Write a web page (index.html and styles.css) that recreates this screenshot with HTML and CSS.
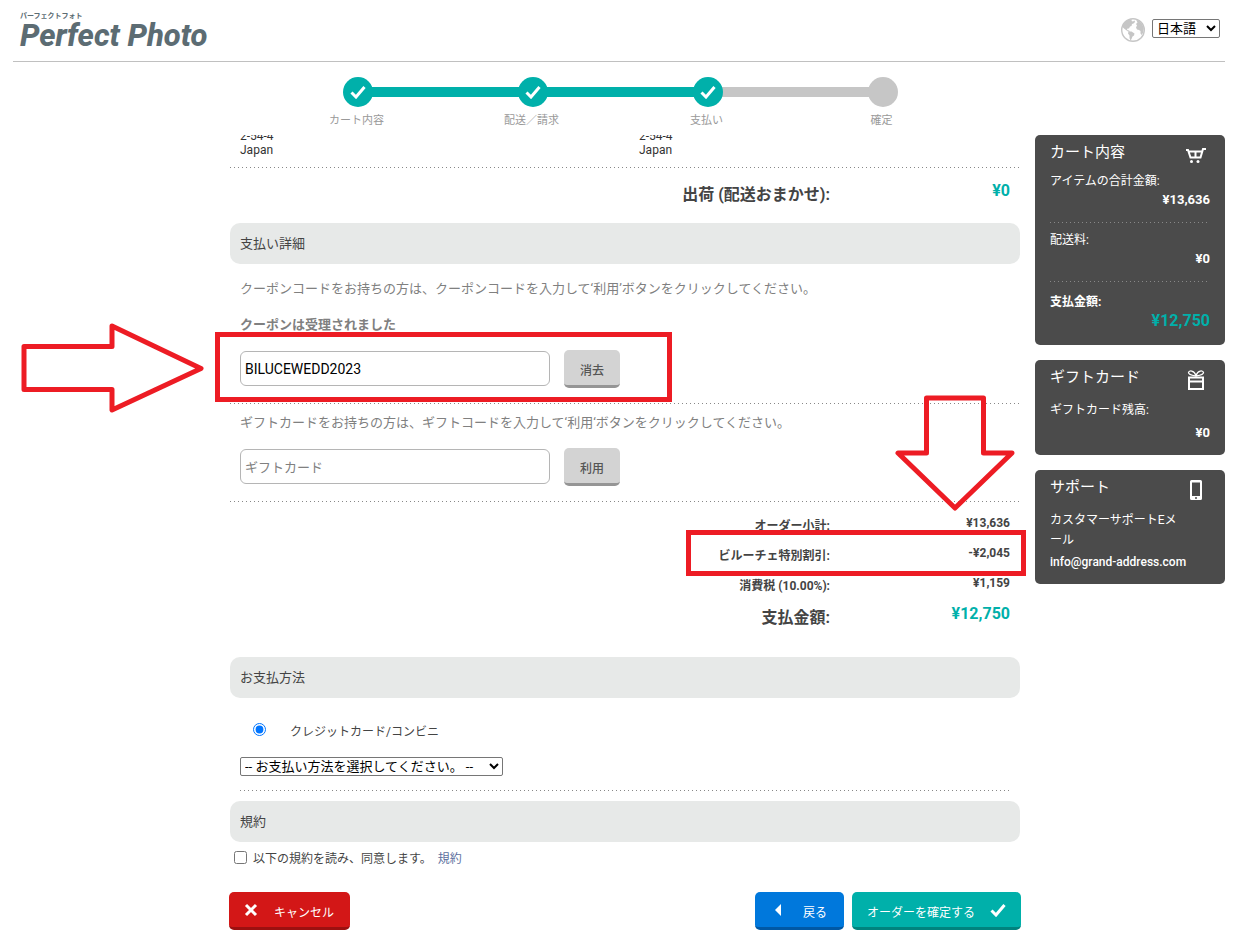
FILE: index.html
```html
<!DOCTYPE html>
<html lang="ja">
<head>
<meta charset="utf-8">
<meta name="viewport" content="width=device-width, initial-scale=1">
<title>Perfect Photo</title>
<link rel="stylesheet" href="styles.css">
</head>
<body>
<header class="header">
  <a class="logo" href="#"><span class="logo-kana">パーフェクトフォト</span><span class="logo-name">Perfect Photo</span></a>
  <div class="language">
    <svg class="globe" viewBox="0 0 24 24" aria-hidden="true">
      <circle cx="12" cy="12" r="11.3" fill="#fff" stroke="#c6c6c6" stroke-width="1.4"/>
      <path fill="#c6c6c6" d="M2 6.500 5 3 8 1.500 11 1.200 10.500 3 12 3.500 13.500 2.500 14 4 12.500 5.500 11 6 10.500 8 9 8.500 8 10.500 6.500 10.500 6 12 8 12.500 9 13.300 7 13.500 5 12 3 10.500 1.500 9ZM7.500 13.500 10.500 13.500 13.500 15.500 13 17.500 11.500 18.500 10.500 21 9.500 22.500 8.500 20 8.500 17.500 7 15.500ZM15 1.500 18.500 3 21.500 6.500 22.800 11 22 15 20.500 17 19.500 15.500 19.500 13 18 12 16 11.500 15 9.500 16 7.500 15 6 16.500 4.500Z"/>
    </svg>
    <select class="select" aria-label="言語"><option>日本語</option></select>
  </div>
</header>

<ol class="steps">
  <li class="step done"><span class="dot"><svg viewBox="0 0 16 14"><path d="M1.500 7.500 6 12 14.500 2"/></svg></span><span>カート内容</span></li>
  <li class="step done"><span class="dot"><svg viewBox="0 0 16 14"><path d="M1.500 7.500 6 12 14.500 2"/></svg></span><span>配送／請求</span></li>
  <li class="step done"><span class="dot"><svg viewBox="0 0 16 14"><path d="M1.500 7.500 6 12 14.500 2"/></svg></span><span>支払い</span></li>
  <li class="step"><span class="dot"></span><span>確定</span></li>
</ol>

<div class="layout">
  <main class="main">
    <div class="addresses">
      <address>2-54-4<br>Japan</address>
      <address>2-54-4<br>Japan</address>
    </div>
    <hr class="rule">
    <dl class="totals shipping">
      <div class="total-row grand"><dt>出荷 (配送おまかせ):</dt><dd>¥0</dd></div>
    </dl>

    <h2 class="bar">支払い詳細</h2>
    <section class="code coupon">
      <p>クーポンコードをお持ちの方は、クーポンコードを入力して‘利用’ボタンをクリックしてください。</p>
      <p class="accepted">クーポンは受理されました</p>
      <div class="code-row">
        <input class="field" type="text" value="BILUCEWEDD2023" aria-label="クーポンコード">
        <button class="btn grey" type="button">消去</button>
      </div>
      <span class="mark-box" aria-hidden="true"></span>
      <svg class="mark-arrow-right" viewBox="0 0 184 90" aria-hidden="true"><path d="M3 23.500H91V3L180 45.500 91 87V66.500H3Z"/></svg>
    </section>
    <hr class="rule">
    <section class="code gift">
      <p>ギフトカードをお持ちの方は、ギフトコードを入力して‘利用‘ボタンをクリックしてください。</p>
      <div class="code-row">
        <input class="field" type="text" placeholder="ギフトカード" aria-label="ギフトカード">
        <button class="btn grey" type="button">利用</button>
      </div>
    </section>
    <hr class="rule">
    <dl class="totals order">
      <div class="total-row"><dt>オーダー小計:</dt><dd>¥13,636</dd></div>
      <div class="total-row marked"><dt>ビルーチェ特別割引:</dt><dd>-¥2,045</dd></div>
      <div class="total-row"><dt>消費税 (10.00%):</dt><dd>¥1,159</dd></div>
      <div class="total-row grand"><dt>支払金額:</dt><dd>¥12,750</dd></div>
    </dl>
    <svg class="mark-arrow-down" viewBox="0 0 120 116" aria-hidden="true"><path d="M31.500 3H88.500V58H117L60 113 3 58H31.500Z"/></svg>

    <h2 class="bar">お支払方法</h2>
    <section class="method">
      <label class="radio-row"><input type="radio" name="method" checked><span>クレジットカード/コンビニ</span></label>
      <select class="select" aria-label="お支払い方法"><option>-- お支払い方法を選択してください。 --</option></select>
      <hr class="rule">
    </section>

    <h2 class="bar">規約</h2>
    <div class="terms">
      <input id="agree" type="checkbox"><label for="agree">以下の規約を読み、同意します。</label><a href="#">規約</a>
    </div>
    <div class="actions">
      <button class="btn red" type="button"><svg class="cross" viewBox="0 0 14 14"><path d="M2 2 12 12M12 2 2 12"/></svg>キャンセル</button>
      <button class="btn blue" type="button"><svg class="back" viewBox="0 0 6 12"><path d="M6 0V12L0 6Z"/></svg>戻る</button>
      <button class="btn green" type="button">オーダーを確定する<svg class="tick" viewBox="0 0 16 14"><path d="M1.500 7.500 6 12 14.500 2"/></svg></button>
    </div>
  </main>

  <aside class="sidebar">
    <section class="card">
      <h3>カート内容<svg viewBox="0 0 22 20"><path fill="none" stroke="#fff" stroke-width="2" d="M1 4H3L5.500 11.500H15.500L18 3H21M4 5.500H17M10.500 6V11"/><circle cx="6.500" cy="15.500" r="1.500" fill="#fff"/><circle cx="13" cy="15.500" r="1.500" fill="#fff"/></svg></h3>
      <dl>
        <dt>アイテムの合計金額:</dt><dd>¥13,636</dd>
      </dl>
      <hr class="rule">
      <dl>
        <dt>配送料:</dt><dd>¥0</dd>
      </dl>
      <hr class="rule">
      <dl class="sum">
        <dt>支払金額:</dt><dd>¥12,750</dd>
      </dl>
    </section>
    <section class="card gift-card">
      <h3>ギフトカード<svg viewBox="0 0 22 20"><path fill="none" stroke="#fff" stroke-width="2" d="M4 7.500H18V19H4ZM4 11.500H18"/><path fill="none" stroke="#fff" stroke-width="1.300" d="M11 6C8 5.500 3.500 5 3.500 2.500 4 .2 9 0 11 5.500 13 0 18 .2 18.500 2.500 18.500 5 14 5.500 11 6"/></svg></h3>
      <dl>
        <dt>ギフトカード残高:</dt><dd>¥0</dd>
      </dl>
    </section>
    <section class="card support">
      <h3>サポート<svg viewBox="0 0 22 20"><path fill="#fff" fill-rule="evenodd" d="M6.500 0H15.500Q17 0 17 1.500V18.500Q17 20 15.500 20H6.500Q5 20 5 18.500V1.500Q5 0 6.500 0ZM7 2.500V16H15V2.500ZM10 17.300V18.700H12V17.300Z"/></svg></h3>
      <p>カスタマーサポートEメール</p>
      <a href="#">info@grand-address.com</a>
    </section>
  </aside>
</div>
</body>
</html>
```

FILE: styles.css
```css
*, *::before, *::after { box-sizing: border-box; }

body {
  margin: 0;
  padding: 0 14px 0 13px;
  background: #fff;
  color: #444;
  font: 12px/20px Roboto, "Noto Sans CJK JP", sans-serif;
}

h2, h3, p, dl, dd, ol { margin: 0; padding: 0; font-weight: 400; }
input, select, button { font-family: inherit; margin: 0; }
a { text-decoration: none; }

.header {
  display: flex;
  justify-content: space-between;
  height: 62px;
  padding: 12px 5px 0 7px;
  border-bottom: 1px solid #c0c0c0;
}
.logo { color: #5c6c73; font-weight: 700; }
.logo-kana { display: block; font-size: 7px; line-height: 8px; }
.logo-name { display: block; font-size: 31px; line-height: 32px; font-style: italic; font-weight: 800; }
.language { display: flex; gap: 7px; padding-top: 6px; }
.globe { width: 24px; height: 24px; }
.select {
  height: 19px;
  padding: 0;
  border: 1px solid #767676;
  border-radius: 2px;
  background: #fff;
  color: #000;
  font-size: 13px;
}
.language .select { width: 68px; margin-top: 1px; }

.steps {
  display: flex;
  justify-content: center;
  height: 73px;
  padding: 15px 0 0 3px;
  list-style: none;
}
.step {
  position: relative;
  display: flex;
  flex-direction: column;
  align-items: center;
  gap: 4px;
  width: 175px;
  color: #999;
  font-size: 11px;
}
.step + .step::before {
  content: "";
  position: absolute;
  top: 10px;
  right: 50%;
  width: 100%;
  height: 10px;
  background: #c6c6c6;
}
.step + .step.done::before { background: #00b0aa; }
.dot {
  z-index: 1;
  display: grid;
  place-items: center;
  width: 30px;
  height: 30px;
  border-radius: 50%;
  background: #c6c6c6;
}
.dot + span { padding-right: 3px; }
.done .dot { z-index: 2; background: #00b0aa; }
.dot svg, .tick { width: 16px; height: 14px; fill: none; stroke: #fff; stroke-width: 3; }

.layout { display: flex; align-items: flex-start; gap: 15px; padding-left: 217px; }
.main { position: relative; flex: 1; min-width: 0; }
.sidebar { display: grid; gap: 15px; width: 190px; }

.rule {
  height: 1px;
  margin: 0;
  border: 0;
  background: repeating-linear-gradient(90deg, #888 0 1px, transparent 1px 4px);
}
.addresses {
  display: grid;
  grid-template-columns: 1fr 1fr;
  gap: 18px;
  align-content: end;
  height: 32px;
  padding: 0 0 10px 10px;
  overflow: hidden;
  color: #333;
}
.addresses address { font-style: normal; line-height: 14px; }

.totals { padding-right: 10px; }
.total-row {
  display: grid;
  grid-template-columns: 1fr 180px;
  height: 30px;
  text-align: right;
}
.total-row dt { padding-top: 3px; font-weight: 700; }
.total-row dd { font-weight: 700; }
.grand { font-size: 16px; }
.grand dt { padding-top: 5px; }
.grand dd { padding-top: 1px; color: #00b0aa; }
.shipping { height: 55px; padding-top: 12px; }
.order { height: 155px; padding-top: 11px; }
.marked { position: relative; }
.marked::after {
  content: "";
  position: absolute;
  inset: -13px -16px -3px auto;
  width: 340px;
  border: 5px solid #ed1c24;
}

.bar {
  padding: 10px;
  border-radius: 10px;
  background: #e7e9e8;
  font-size: 13px;
  line-height: 21px;
}
.code { position: relative; padding: 0 10px; color: #808080; font-size: 13px; }
.coupon { height: 139px; padding-top: 15px; }
.gift { height: 97px; padding-top: 9px; }
.accepted { padding-top: 16px; font-weight: 700; }
.code-row { display: flex; gap: 14px; padding-top: 15px; }
.field {
  width: 310px;
  height: 35px;
  margin-top: 1px;
  padding: 0 4px;
  border: 1px solid #b5b5b5;
  border-radius: 6px;
  color: #000;
  font-size: 14px;
}
.field::placeholder { color: #808080; font-size: 13px; }
.btn {
  display: flex;
  align-items: center;
  height: 38px;
  padding: 4px 15px 0;
  border: 0;
  border-bottom: 3px solid;
  border-radius: 5px;
  color: #fff;
  font-size: 12px;
}
.grey {
  justify-content: center;
  width: 56px;
  padding: 4px 0 0;
  border-color: #959595;
  background: #d3d3d3;
  color: #555;
  font-weight: 500;
}
.mark-box {
  position: absolute;
  top: 68px;
  left: -15px;
  width: 457px;
  height: 70px;
  border: 5px solid #ed1c24;
}
.mark-arrow-right, .mark-arrow-down {
  position: absolute;
  fill: none;
  stroke: #ed1c24;
  stroke-width: 5;
  stroke-linejoin: round;
}
.mark-arrow-right { top: 59px; left: -209px; width: 184px; height: 90px; }
.mark-arrow-down { top: 260px; right: 5px; width: 120px; height: 116px; }

.method { height: 103px; padding: 22px 10px 0; }
.radio-row { display: flex; gap: 24px; height: 37px; padding-left: 13px; }
.radio-row input { width: 13px; height: 13px; margin-top: 3px; }
.radio-row span { padding-top: 2px; }
.method .rule { margin-top: 14px; }
.method .select { display: block; width: 263px; }

.terms { display: flex; align-items: center; gap: 6px; height: 30px; padding-left: 4px; }
.terms label, .terms a { padding-top: 3px; }
.terms a { color: #5c6f9e; }
.actions { display: flex; gap: 8px; margin: 20px -1px 0; }
.actions .red { margin-right: auto; }
.red { gap: 16px; padding-right: 16px; border-color: #9c1010; background: #d31717; }
.blue { gap: 22px; padding: 4px 17px 0 20px; border-color: #0058a5; background: #0078dc; }
.green { gap: 15px; border-color: #00837e; background: #00b0aa; }
.cross { width: 14px; height: 14px; stroke: #fff; stroke-width: 3; }
.back { width: 6px; height: 12px; fill: #fff; }
.btn svg { margin-bottom: 4px; }

.card { min-height: 210px; padding: 7px 15px 0; border-radius: 5px; background: #4b4b4b; color: #fff; }
.card h3 { display: flex; justify-content: space-between; height: 29px; font-size: 15px; }
.card h3 svg { width: 22px; height: 20px; margin: 4px 3px 0 0; }
.card dd { text-align: right; font-size: 13px; font-weight: 700; line-height: 18px; }
.card dl { height: 51px; }
.card .rule + dl { height: 58px; padding-top: 7px; }
.card .rule + .sum { padding-top: 10px; font-weight: 700; }
.card .sum dd { color: #00b0aa; font-size: 16px; }
.card.gift-card { min-height: 95px; }
.gift-card h3, .support h3 { height: 33px; }
.gift-card h3 svg, .support h3 svg { margin-top: 3px; }
.gift-card dd { padding-top: 4px; }
.card.support { min-height: 114px; }
.support p { padding-right: 30px; line-break: loose; }
.support a { color: #fff; font-weight: 500; line-height: 24px; }
```
